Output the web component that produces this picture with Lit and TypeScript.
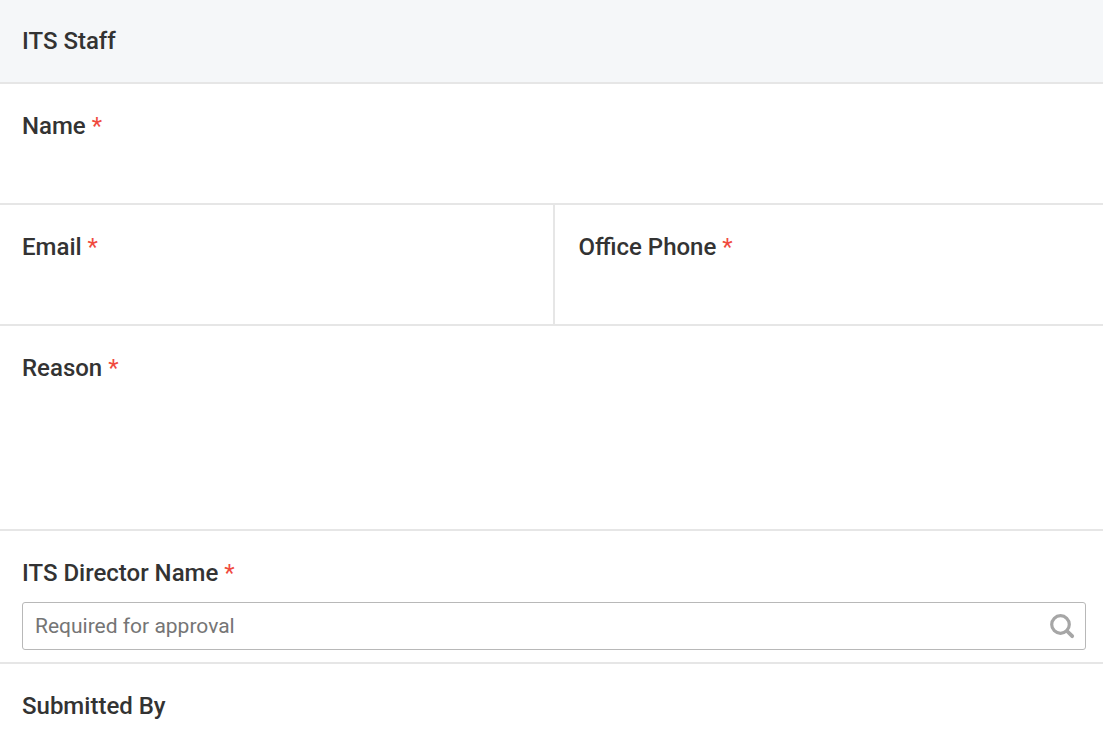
import { LitElement, html, css, nothing } from "lit";
import { customElement } from "lit/decorators.js";

@customElement("app-root")
export class AppRoot extends LitElement {
  static styles = css`
    :host {
      display: block;
      min-height: 100vh;
      background: #fff;
      color: #333;
      font-family: Roboto, "Liberation Sans", sans-serif;
      font-size: 24px;
      line-height: 28px;
    }
    * { box-sizing: border-box; }
    .section {
      margin: 0;
      padding: 27px 22px;
      background: #f5f7f9;
      border-bottom: 2px solid #e6e6e6;
      font-size: 24px;
      font-weight: 500;
    }
    .row { display: grid; border-bottom: 2px solid #e6e6e6; }
    .row.pair { grid-template-columns: calc(50% + 1px) 1fr; }
    .row.last { border-bottom: 0; }
    .field {
      display: flex;
      flex-direction: column;
      gap: 15px;
      min-width: 0;
      padding: 28px 17px 12px 22px;
    }
    .field + .field { border-left: 2px solid #e6e6e6; padding-left: 24px; }
    label { font-weight: 500; }
    .required { color: #f04a3e; font-weight: 400; }
    .entry {
      width: 100%;
      height: 36px;
      border: 0;
      padding: 0;
      outline: 0;
      resize: none;
      background: transparent;
      color: inherit;
      font: inherit;
      font-size: 21px;
    }
    .entry.tall { height: 120px; }
    .lookup {
      display: flex;
      align-items: center;
      height: 48px;
      padding: 0 10px 0 12px;
      border: 1px solid #b8b8b8;
      border-radius: 3px;
    }
    .lookup .entry { flex: 1; min-width: 0; }
    .entry::placeholder { color: #757575; opacity: 1; }
    .search {
      display: flex;
      padding: 0;
      border: 0;
      background: none;
      color: #a6a6a6;
    }
  `;

  private label(id: string, text: string, required = true) {
    return html`<label for=${id}>${text}${required ? html` <span class="required">*</span>` : nothing}</label>`;
  }

  private field(id: string, text: string) {
    return html`<div class="field">${this.label(id, text)}<input class="entry" id=${id} /></div>`;
  }

  render() {
    return html`
      <form>
        <h2 class="section">ITS Staff</h2>
        <div class="row">${this.field("name", "Name")}</div>
        <div class="row pair">
          ${this.field("email", "Email")} ${this.field("phone", "Office Phone")}
        </div>
        <div class="row">
          <div class="field">
            ${this.label("reason", "Reason")}
            <textarea class="entry tall" id="reason"></textarea>
          </div>
        </div>
        <div class="row">
          <div class="field">
            ${this.label("director", "ITS Director Name")}
            <div class="lookup">
              <input class="entry" id="director" placeholder="Required for approval" />
              <button class="search" type="button" aria-label="Search">
                <svg width="26" height="26" viewBox="0 0 26 26" fill="none" stroke="currentColor">
                  <circle cx="11.5" cy="11.5" r="8.8" stroke-width="3.2" />
                  <path d="M18 18L23.2 23.2" stroke-width="3.8" stroke-linecap="round" />
                </svg>
              </button>
            </div>
          </div>
        </div>
        <div class="row last">
          <div class="field">
            ${this.label("submitter", "Submitted By", false)}
            <output id="submitter"></output>
          </div>
        </div>
      </form>
    `;
  }
}
